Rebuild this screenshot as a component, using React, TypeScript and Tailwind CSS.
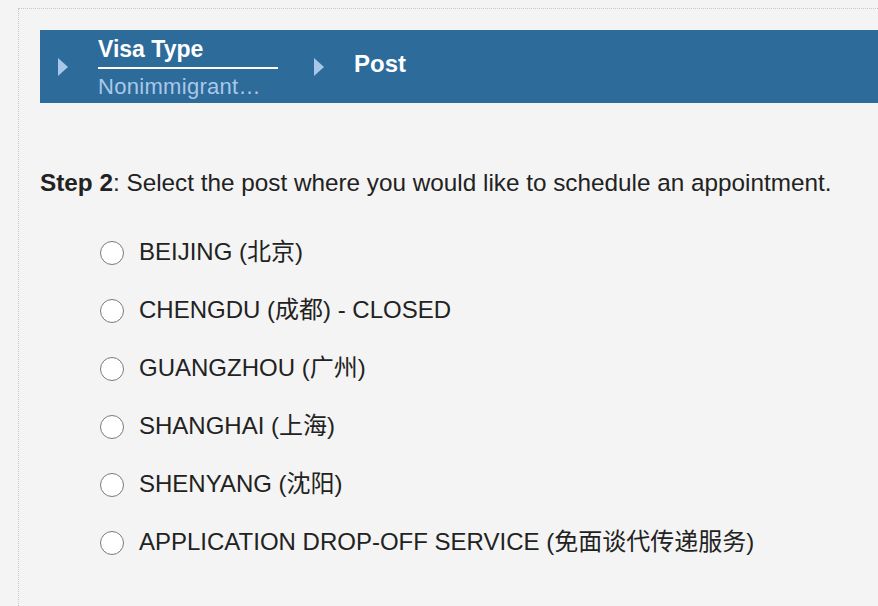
const posts = [
  "BEIJING (北京)",
  "CHENGDU (成都) - CLOSED",
  "GUANGZHOU (广州)",
  "SHANGHAI (上海)",
  "SHENYANG (沈阳)",
  "APPLICATION DROP-OFF SERVICE (免面谈代传递服务)",
];

function Arrow() {
  return (
    <svg width="10" height="18" viewBox="0 0 10 18" className="shrink-0 self-center">
      <path d="M0 0 L10 9 L0 18 Z" fill="#a9c8e8" />
    </svg>
  );
}

export default function App() {
  return (
    <div
      className="min-h-screen bg-[#f4f4f4] pl-[18px] pt-[8px] text-[#222]"
      style={{ fontFamily: '"Liberation Sans", Arial, "Noto Sans CJK SC", sans-serif' }}
    >
      <div className="min-h-[598px] border-l border-t border-dotted border-[#c8c8c8] pl-[21px] pt-[21px]">
        {/* Breadcrumb bar */}
        <div className="flex h-[73px] bg-[#2d6b9b] pl-[18px]">
          <Arrow />
          <div className="ml-[30px] mt-[6px] w-[180px] self-start">
            <div className="border-b-2 border-white pb-[5px] text-[23px] font-bold leading-[26px] text-white">
              Visa Type
            </div>
            <div className="whitespace-nowrap pt-[5px] text-[22px] leading-[26px] tracking-[0.3px] text-[#a9c8e8]">
              Nonimmigrant…
            </div>
          </div>
          <div className="ml-[36px] flex">
            <Arrow />
          </div>
          <div className="ml-[30px] mt-[20px] self-start text-[24px] font-bold leading-[28px] text-white">
            Post
          </div>
        </div>

        {/* Step */}
        <p className="mt-[66px] text-[24.3px] leading-[28px]">
          <span className="font-bold">Step 2</span>: Select the post where you would like to schedule an appointment.
        </p>

        <ul className="mt-[27px] pl-[60px]">
          {posts.map((p) => (
            <li key={p} className="flex h-[58px] items-center">
              <span className="h-[24px] w-[24px] shrink-0 rounded-full border-[1.5px] border-[#7a7a7a] bg-white" />
              <span className="mb-[2px] ml-[15px] text-[24px] leading-[28px]">{p}</span>
            </li>
          ))}
        </ul>
      </div>
    </div>
  );
}
